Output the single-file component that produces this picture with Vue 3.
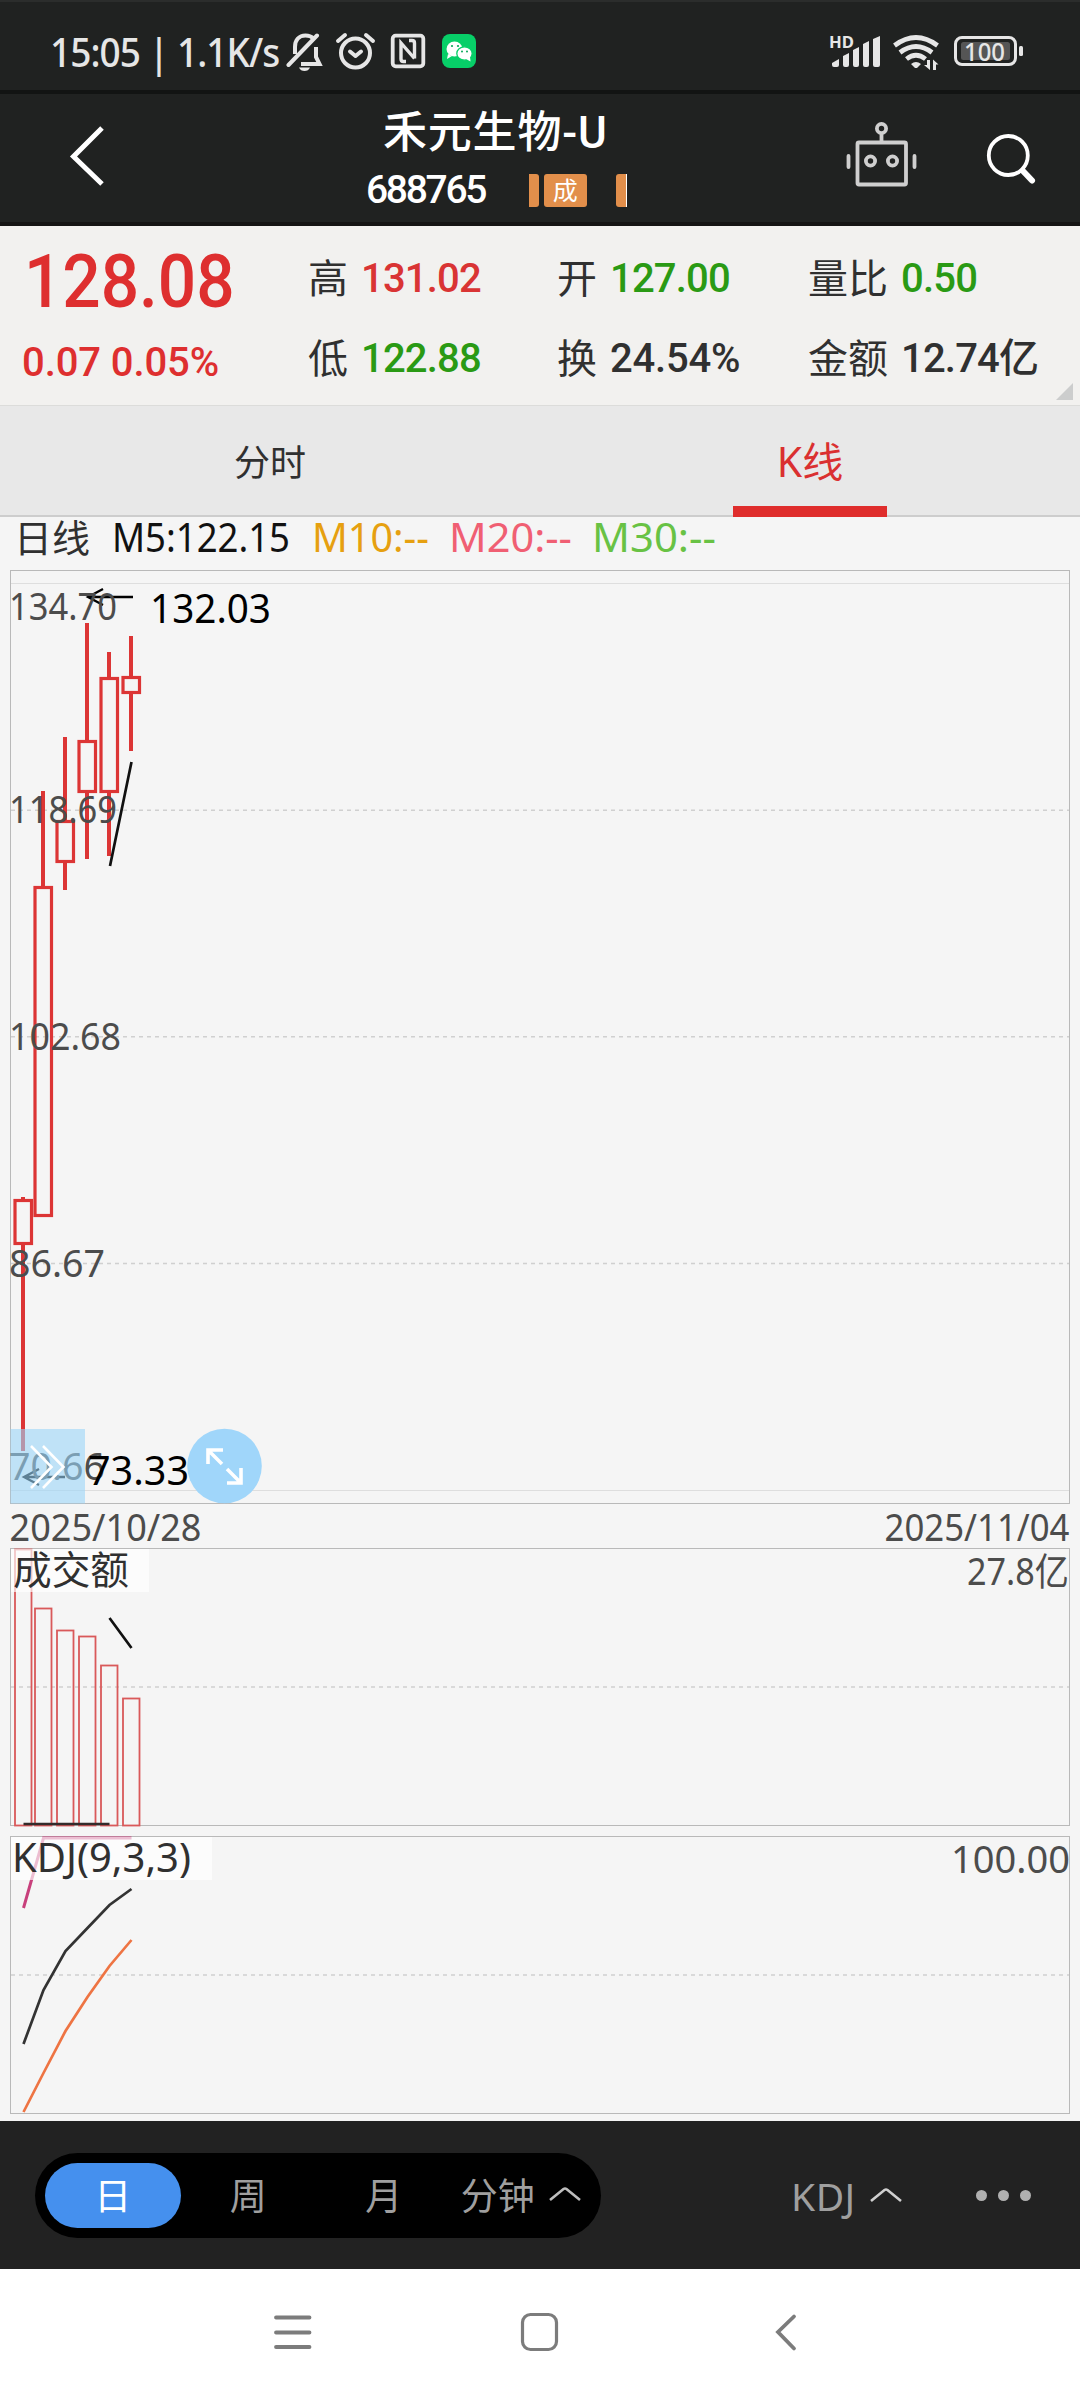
<script setup>
const quotes = [
  [{ k: '高', v: '131.02', c: 'up' }, { k: '低', v: '122.88', c: 'down' }],
  [{ k: '开', v: '127.00', c: 'down' }, { k: '换', v: '24.54%', c: 'flat' }],
  [{ k: '量比', v: '0.50', c: 'down' }, { k: '金额', v: '12.74亿', c: 'flat' }],
]
const averages = [
  { t: 'M5:122.15', w: 173, c: '#111', g: 27 },
  { t: 'M10:--', w: 112, c: '#e6a010', g: 25 },
  { t: 'M20:--', w: 118, c: '#f05f73', g: 25 },
  { t: 'M30:--', w: 119, c: '#68c244', g: 0 },
]
// x centre, wick top, body top, body bottom, wick bottom
const candles = [
  [23, 1197, 1200.5, 1243.5, 1451],
  [43, 791, 887.5, 1215.5, 1215.5],
  [65, 737, 821.5, 861.5, 890],
  [87, 623, 741.5, 791.5, 859],
  [109, 652, 678.5, 791.5, 856],
  [131, 636, 677.5, 692.5, 751],
]
const volumes = [[15, 1549.5], [35, 1608.5], [57, 1630.5], [79, 1636.5], [101, 1665.5], [123, 1698.5]]
const levels = [
  { t: '134.70', x: 11, y: 620, w: 105 },
  { t: '118.69', x: 11, y: 823, w: 105 },
  { t: '102.68', x: 11, y: 1050, w: 109 },
  { t: '86.67', x: 11, y: 1277, w: 93 },
  { t: '70.66', x: 11, y: 1480, w: 93 },
]
</script>

<template>
  <main class="screen">
    <div class="status">
      <span class="clock">15:05 | 1.1K/s</span>
      <svg class="s-left" width="192" height="40" viewBox="286 32 192 40" fill="none" stroke="#e6e6e6" stroke-width="4">
        <path d="M295 54V47c0-7 4-11.500 10.500-11.500c4 0 6 1 8 3M316 47v10l3.500 7H301" />
        <path d="M288.500 65L317 35.500" stroke-linecap="round" />
        <path d="M299 67.500h11c-1 2.500-3 3.500-5.500 3.500s-4.500-1-5.500-3.500z" fill="#e6e6e6" stroke="none" />
        <circle cx="355.500" cy="53" r="14.500" />
        <path d="M350 51.500l5.500 4.500 5.500-4.500" stroke-linecap="round" stroke-linejoin="round" />
        <path d="M338 41l7-6M373 41l-7-6" stroke-linecap="round" />
        <rect x="392.700" y="35.700" width="30.600" height="30.600" rx="3" stroke-width="3.800" />
        <path d="M406 61.500h-2.500q-2.500 0-2.500-2.500V43L414.500 58.500M409 40.500h3q2.500 0 2.500 2.500v15.500" stroke-width="3.400" />
        <g stroke="none">
          <rect x="442" y="34" width="34" height="34" rx="8" fill="#07cf68" />
          <ellipse cx="454.500" cy="49" rx="8" ry="7.500" fill="#fff" />
          <path d="M448 54l-1 5 5-3z" fill="#fff" />
          <ellipse cx="464.500" cy="53.500" rx="7.700" ry="6.700" fill="#fff" stroke="#07cf68" stroke-width="1.300" />
          <path d="M466 59l4.500 2.500-.5-5z" fill="#fff" />
          <g fill="#07a858"><circle cx="452" cy="46" r="1.100" /><circle cx="458" cy="46" r="1.100" /><circle cx="462" cy="51.500" r="1" /><circle cx="467" cy="51.500" r="1" /></g>
        </g>
      </svg>
      <svg class="s-right" width="196" height="40" viewBox="829 32 196 40" fill="#e6e6e6">
        <text x="829" y="47.500" font-size="16" font-weight="700" textLength="25" lengthAdjust="spacingAndGlyphs">HD</text>
        <path d="M832 63l7-4v6q0 2-2 2h-3q-2 0-2-2zM843 56l6-3v12q0 2-2 2h-2q-2 0-2-2zM853 50l6-3v18q0 2-2 2h-2q-2 0-2-2zM863 44l6-3v24q0 2-2 2h-2q-2 0-2-2zM873 39l7-3v29q0 2-2 2h-3q-2 0-2-2z" />
        <g fill="none" stroke="#e6e6e6" stroke-width="4.700">
          <path d="M894.500 45.500q21.500-16 43 0M900 52.500q16-12 32 0M906.500 59q9.500-7.500 19 0" />
        </g>
        <path d="M911 64q5-4 10 0l-4 4h-2zM930 60v10l-6-5h3v-5zM933 70v-10.500l5.500 5h-2.500v5.500z" />
        <rect x="955.500" y="37.500" width="60" height="27" rx="6.500" fill="none" stroke="#e6e6e6" stroke-width="3" />
        <rect x="961" y="42" width="49" height="18" rx="2.500" fill="#555" />
        <rect x="1019" y="46" width="4" height="10" rx="1.500" />
        <text x="964" y="60.500" font-size="25" font-weight="500" textLength="41" lengthAdjust="spacingAndGlyphs">100</text>
      </svg>
    </div>

    <header class="head">
      <svg class="back" width="40" height="66" viewBox="67 123 40 66" fill="none" stroke="#fff" stroke-width="5"><path d="M102 128L73.500 156.500L102 184" /></svg>
      <div class="title">
        <h1>禾元生物-U</h1>
        <div class="sub"><span class="code">688765</span><i class="tag slim"></i><i class="tag">成</i><i class="tag slim cut"></i></div>
      </div>
      <svg class="tools" width="192" height="70" viewBox="845 120 192 70" fill="none" stroke="#cfcfcf" stroke-width="3.800">
        <rect x="857.500" y="142.500" width="48.500" height="42" rx="1.500" />
        <path d="M881.500 142V135M848.500 156v11M914.500 156v11" stroke-linecap="round" />
        <circle cx="881.500" cy="128.500" r="4.600" /><circle cx="870.500" cy="161" r="4.600" /><circle cx="892.500" cy="161" r="4.600" />
        <g stroke="#fff"><circle cx="1008.300" cy="155.500" r="19.500" /><path d="M1023 171l9 9.500" stroke-width="6" stroke-linecap="round" /></g>
      </svg>
    </header>

    <section class="quote">
      <div class="last">
        <b>128.08</b>
        <span>0.07 0.05%</span>
      </div>
      <dl v-for="(col, i) in quotes" :key="i" :class="'col' + i">
        <div v-for="q in col" :key="q.k"><dt>{{ q.k }}</dt><dd :class="q.c">{{ q.v }}</dd></div>
      </dl>
      <i class="corner"></i>
    </section>

    <nav class="tabs"><span>分时</span><span class="on">K线</span></nav>

    <div class="ma">
      <span class="period">日线</span>
      <svg v-for="m in averages" :key="m.t" :width="m.w" height="46" :style="{ marginRight: m.g + 'px' }">
        <text x="-3" y="35" font-size="40" :fill="m.c" :textLength="m.w + 5" lengthAdjust="spacingAndGlyphs">{{ m.t }}</text>
      </svg>
    </div>

    <svg class="chart" width="1080" height="1551" viewBox="0 570 1080 1551" fill="none">
      <g stroke="#dedede"><path d="M11 583.500H1069M11 1490.500H1069" /></g>
      <g stroke="#d0d0d0" stroke-width="1.500" stroke-dasharray="4 4"><path d="M11 810.200H1069M11 1036.800H1069M11 1263.500H1069M11 1687H1069M11 1975H1069" /></g>
      <g stroke="#b9b9b9">
        <rect x="10.500" y="570.500" width="1059" height="933" />
        <rect x="10.500" y="1548.500" width="1059" height="277" />
        <rect x="10.500" y="1836.500" width="1059" height="277" />
      </g>
      <g stroke="#dc3535" stroke-width="3.200">
        <template v-for="c in candles" :key="c[0]">
          <path :d="`M${c[0]} ${c[1]}V${c[2]}M${c[0]} ${c[3]}V${c[4]}`" stroke-width="4" />
          <rect :x="c[0] - 8" :y="c[2]" width="16.500" :height="c[3] - c[2]" />
        </template>
      </g>
      <g stroke="#d9595a" stroke-width="1.800"><rect v-for="v in volumes" :key="v[0]" :x="v[0]" :y="v[1]" width="16.500" :height="1825.500 - v[1]" /></g>
      <g stroke="#111" stroke-width="2.700">
        <path d="M110 866L131.500 762M109.500 1618L131.500 1648" />
        <path d="M23.500 1824H109.500" stroke="#332b2b" />
        <path d="M133 597H88M103 589l-15 8 15 8" stroke="#000" stroke-width="2.300" />
        <path d="M65 1477H24M39 1469l-15 8 15 8" stroke="#000" stroke-width="2.300" />
      </g>
      <g class="axis">
        <text v-for="l in levels" :key="l.t" :x="l.x - 2" :y="l.y" :textLength="l.w + 3" lengthAdjust="spacingAndGlyphs">{{ l.t }}</text>
        <text x="9.500" y="1541" textLength="192" lengthAdjust="spacingAndGlyphs">2025/10/28</text>
        <text x="884.500" y="1541" textLength="185" lengthAdjust="spacingAndGlyphs">2025/11/04</text>
        <text x="967" y="1585" textLength="102" lengthAdjust="spacingAndGlyphs">27.8亿</text>
        <text x="951" y="1873" textLength="119" lengthAdjust="spacingAndGlyphs">100.00</text>
      </g>
      <g font-size="40" fill="#000">
        <text x="150" y="623" textLength="121" lengthAdjust="spacingAndGlyphs">132.03</text>
        <text x="88" y="1485" textLength="101" lengthAdjust="spacingAndGlyphs">73.33</text>
      </g>
      <rect x="10.500" y="1429" width="74.500" height="74.500" fill="#9bd5f9" fill-opacity=".6" />
      <path d="M31 1446l20.500 21-20.500 21M43 1446l20.500 21-20.500 21" stroke="#fff" stroke-width="2.600" />
      <circle cx="224.500" cy="1466" r="37.300" fill="#a0d6fa" />
      <path d="M223 1450H208v14M208 1450l14 14M241 1468v15H227M241 1483l-14-14" stroke="#fff" stroke-width="3.600" />

      <path d="M23.500 1908L43.500 1838H131.500" stroke="#c8407c" stroke-width="3" />
      <path d="M23.500 2044L43.500 1990L65.500 1951L87.500 1928L109.500 1905L131.500 1889" stroke="#333" stroke-width="2.700" />
      <path d="M23.500 2112L43.500 2073L65.500 2031L87.500 1997L109.500 1966L131.500 1940" stroke="#ee7443" stroke-width="2.700" />
      <rect x="11" y="1549" width="138" height="43" fill="#fff" fill-opacity=".66" />
      <rect x="11" y="1837" width="201" height="43" fill="#fff" fill-opacity=".66" />
      <g font-size="39" fill="#303030">
        <text x="13" y="1583.500" textLength="116" lengthAdjust="spacingAndGlyphs">成交额</text>
        <text x="12" y="1872" font-size="40" textLength="179" lengthAdjust="spacingAndGlyphs">KDJ(9,3,3)</text>
      </g>
    </svg>

    <footer class="bar">
      <div class="pill">
        <span class="on">日</span><span>周</span><span>月</span>
        <span class="min">分钟<svg width="34" height="18" viewBox="0 0 34 18" fill="none" stroke="#bdbdbd" stroke-width="2.600"><path d="M2 15L15.500 4q1.500-1 3 0L32 15" /></svg></span>
      </div>
      <div class="ind">KDJ<svg width="34" height="18" viewBox="0 0 34 18" fill="none" stroke="#d0d0d0" stroke-width="2.600"><path d="M2 15L15.500 4q1.500-1 3 0L32 15" /></svg></div>
      <div class="dots"><i></i><i></i><i></i></div>
    </footer>

    <nav class="sys">
      <svg width="524" height="42" viewBox="273 2311 524 42" fill="none" stroke="#7c7c7c" stroke-width="3.800">
        <path d="M276 2317.500H309.500M276 2332.500H309.500M276 2347H309.500" stroke-linecap="round" />
        <rect x="522.500" y="2314.500" width="34" height="35" rx="8" stroke-width="3.200" />
        <path d="M794 2316.500L778 2332L794 2348.500" stroke-linecap="round" />
      </svg>
    </nav>
  </main>
</template>

<style>
body { margin: 0; background: #fff; }
</style>

<style scoped>
.screen {
  width: 1080px; height: 2400px; overflow: hidden; display: flex; flex-direction: column;
  background: #f5f5f5; font-family: "Noto Sans", "Noto Sans CJK SC", sans-serif; color: #303030;
}
svg { display: block; flex: none; }
svg text { font-family: "Noto Sans", "Noto Sans CJK SC", sans-serif; }
i { font-style: normal; }
.status {
  box-sizing: border-box; height: 94px; flex: none; display: flex; align-items: flex-start; padding: 30px 55px 0 50px;
  background: #202221; border-top: 2px solid #2b2d2c; border-bottom: 4px solid #121413;
}
.clock { width: 236px; font-size: 40px; line-height: 40px; font-weight: 500; letter-spacing: -1px; color: #e6e6e6; white-space: nowrap; transform: scaleX(.925); transform-origin: 0 50%; }
.s-right { margin-left: auto; }
.head {
  box-sizing: border-box; height: 132px; flex: none; display: flex; align-items: flex-start; background: #202221;
  border-bottom: 4px solid #151414; padding: 0 43px 0 67px;
}
.back { margin-top: 29px; }
.title { width: 264px; margin-left: 259px; }
h1 { margin: 14px 0 0 17px; font: 500 44px/50px "Roboto", "Noto Sans CJK SC", sans-serif; letter-spacing: .8px; color: #fff; white-space: nowrap; }
.sub { display: flex; margin-top: 16px; height: 33px; align-items: center; }
.code { width: 162.500px; flex: none; font: 500 39px/33px "Roboto", sans-serif; letter-spacing: -2.300px; color: #fff; }
.tag { box-sizing: border-box; flex: none; width: 42.500px; height: 33px; border-radius: 3px; background: #e28f4b; color: #fff; font: 400 25px/31px "Noto Sans CJK SC", sans-serif; text-align: center; margin-right: 29.500px; }
.tag.slim { width: 10.500px; margin-right: 5px; border-radius: 0 3px 3px 0; }
.tag.cut { border-radius: 3px 0 0 3px; border-right: 1px solid #fff; }
.tools { margin: 26px 0 0 auto; }
.quote { position: relative; height: 179px; flex: none; display: flex; background: #f2f1ef; }
.last { width: 308px; box-sizing: border-box; padding-left: 22px; color: #de2f2f; }
.last b, .last span, dd { font-family: "Roboto", "Noto Sans CJK SC", sans-serif; white-space: nowrap; font-weight: 500; }
.last b { display: block; height: 106px; margin-left: 2px; font-size: 75px; line-height: 110px; transform: scaleX(.9); transform-origin: 0 50%; }
.last span { display: block; font-size: 40px; line-height: 62px; letter-spacing: -.1px; }
dl { margin: 0; padding-top: 13px; }
dl div { display: flex; height: 80px; align-items: center; }
dt { font: 400 40px/60px "Noto Sans CJK SC", sans-serif; margin: -7px 13px 0 0; }
dd { margin: 0; font-size: 40px; line-height: 60px; letter-spacing: -.8px; }
.col0 { width: 249px; } .col1 { width: 251px; }
.col1 dd.flat { letter-spacing: -.2px; }
.up { color: #d93434; } .down { color: #2a9a14; } .flat { color: #303030; }
.corner { position: absolute; right: 7px; bottom: 5px; border-left: 17px solid transparent; border-bottom: 17px solid #cccdcd; }
.tabs { box-sizing: border-box; height: 112px; flex: none; display: flex; background: #e8e8e8; border-top: 1px solid #dcdcda; border-bottom: 2px solid #cdcdcd; }
.tabs span { flex: 1; display: flex; justify-content: center; align-items: center; font-size: 36px; color: #303030; position: relative; padding-bottom: 1px; }
.tabs .on { font-size: 41px; color: #da3030; padding-bottom: 4px; }
.tabs .on::after { content: ""; position: absolute; bottom: -2px; width: 154px; height: 11px; background: #df2d2c; }
.ma { height: 53px; flex: none; display: flex; padding-left: 14px; }
.period { width: 101px; font: 400 38px/38px "Noto Sans CJK SC", sans-serif; }
.ma svg { overflow: visible; }
.axis text { font-size: 38px; fill: #4c4c4c; }
.bar { height: 148px; flex: none; display: flex; align-items: center; background: #222; color: #9f9f9f; font-size: 39px; }
.pill { box-sizing: border-box; margin-left: 35px; width: 566px; height: 85px; padding: 10px; border-radius: 43px; background: #000; display: flex; }
.pill span { width: 136px; height: 63px; padding-bottom: 2px; display: flex; align-items: center; justify-content: center; font-size: 37px; }
.pill .on { background: #4590ee; color: #fff; border-radius: 33px; }
.pill .min { width: 140px; gap: 13px; }
.ind { margin-left: 190px; width: 187px; letter-spacing: .5px; display: flex; align-items: center; gap: 13px; }
.dots { display: flex; gap: 11px; margin-left: -2px; }
.dots i { width: 11px; height: 11px; border-radius: 50%; background: #b0b0b0; }
.sys { flex: 1; background: #fff; padding: 42px 0 0 273px; }
</style>
